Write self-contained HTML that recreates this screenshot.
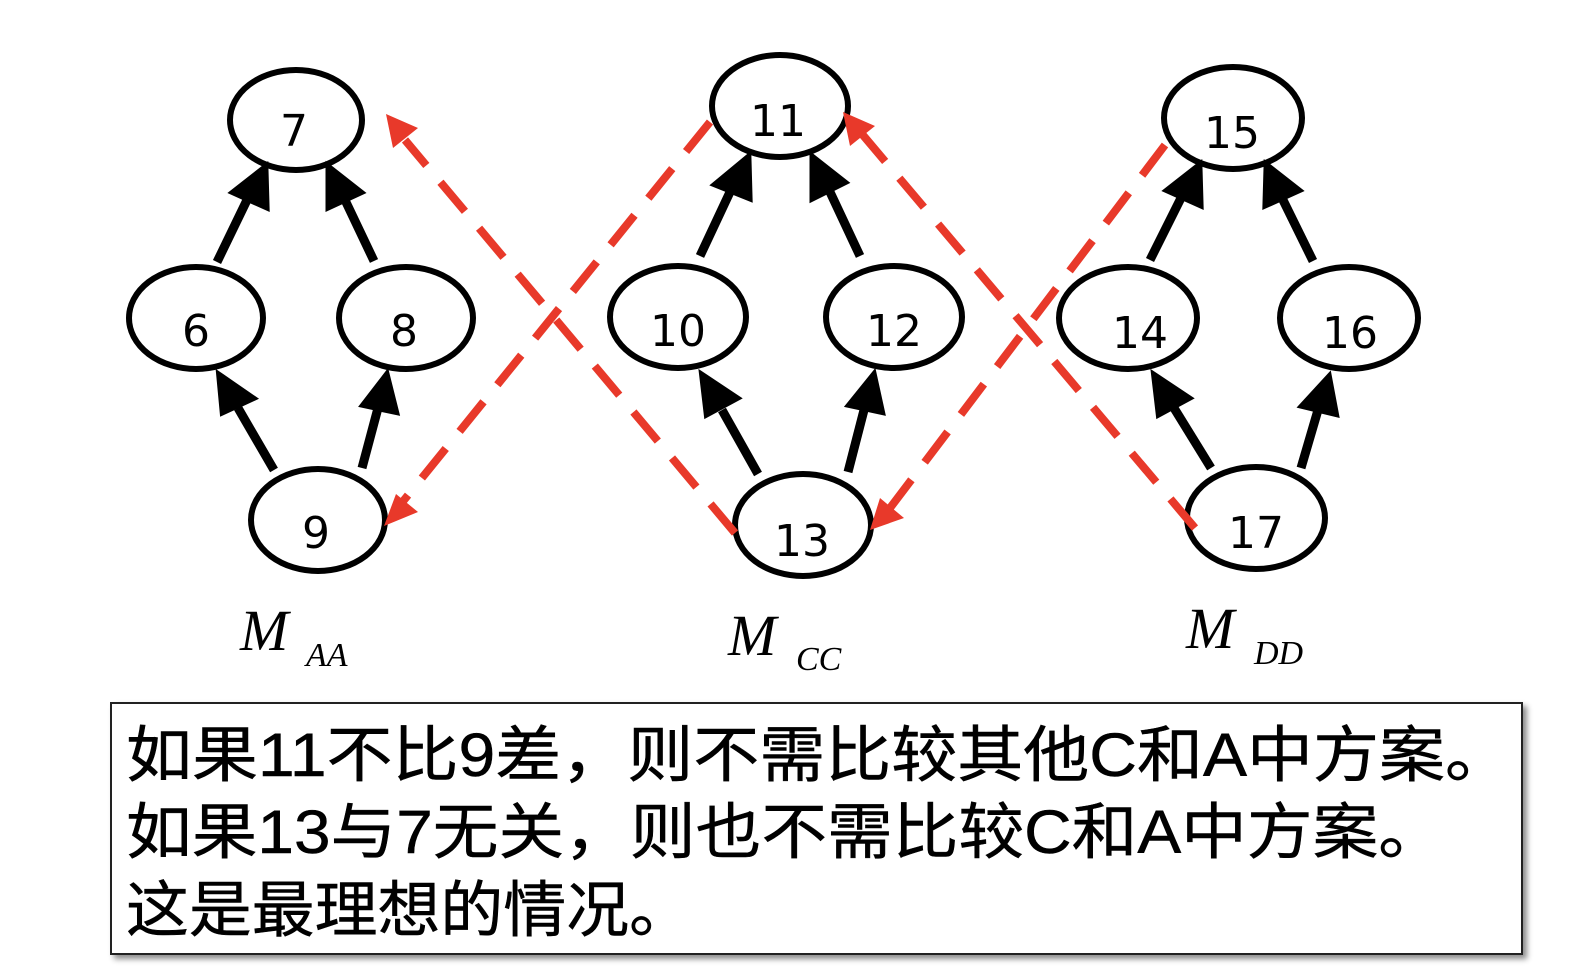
<!DOCTYPE html>
<html><head><meta charset="utf-8"><style>
html,body{margin:0;padding:0;background:#fff;}
svg{display:block;}
</style></head><body>
<svg width="1578" height="970" viewBox="0 0 1578 970" xmlns="http://www.w3.org/2000/svg">
<defs>
<filter id="sh" x="-5%" y="-5%" width="110%" height="120%"><feDropShadow dx="4" dy="4" stdDeviation="3" flood-color="#000" flood-opacity="0.45"/></filter>
</defs>
<g fill="none" stroke="#000" stroke-width="6">
<ellipse cx="296" cy="120" rx="66" ry="50"/>
<ellipse cx="196" cy="318" rx="67" ry="51"/>
<ellipse cx="406" cy="318" rx="67" ry="51"/>
<ellipse cx="318" cy="520" rx="67" ry="51"/>
<ellipse cx="780" cy="106" rx="68" ry="51"/>
<ellipse cx="678" cy="317" rx="68" ry="51"/>
<ellipse cx="894" cy="317" rx="68" ry="51"/>
<ellipse cx="803" cy="525" rx="68" ry="51"/>
<ellipse cx="1233" cy="118" rx="69" ry="51"/>
<ellipse cx="1128" cy="318" rx="69" ry="51"/>
<ellipse cx="1349" cy="318" rx="69" ry="51"/>
<ellipse cx="1256" cy="518" rx="69" ry="51"/>
</g>
<g stroke="#000" stroke-width="9" fill="#000">
<line x1="217" y1="262" x2="247" y2="200"/><polygon points="264,170 265,205 236,192"/>
<line x1="374" y1="261" x2="345" y2="200"/><polygon points="330,170 358,192 330,205"/>
<line x1="274" y1="470" x2="238" y2="408"/><polygon points="221,378 250,398 224,410"/>
<line x1="362" y1="468" x2="378" y2="408"/><polygon points="386,378 394,410 366,404"/>
<line x1="700" y1="256" x2="730" y2="192"/><polygon points="747,160 748,196 718,184"/>
<line x1="860" y1="256" x2="830" y2="192"/><polygon points="814,160 842,182 814,196"/>
<line x1="758" y1="474" x2="722" y2="410"/><polygon points="704,378 734,398 708,412"/>
<line x1="848" y1="472" x2="864" y2="410"/><polygon points="873,378 880,410 852,404"/>
<line x1="1150" y1="260" x2="1181" y2="198"/><polygon points="1198,168 1199,203 1170,190"/>
<line x1="1313" y1="261" x2="1283" y2="200"/><polygon points="1268,168 1296,190 1267,203"/>
<line x1="1211" y1="468" x2="1174" y2="408"/><polygon points="1156,378 1186,398 1160,412"/>
<line x1="1301" y1="468" x2="1318" y2="410"/><polygon points="1328,380 1334,412 1305,405"/>
</g>
<g stroke="#e8392a" stroke-width="8" stroke-dasharray="38,22" fill="none">
<line x1="735" y1="533" x2="405" y2="140"/>
<line x1="710" y1="122" x2="400" y2="505"/>
<line x1="1195" y1="528" x2="862" y2="134"/>
<line x1="1165" y1="145" x2="890" y2="508"/>
</g>
<g fill="#e8392a">
<polygon points="386,114 418,128 393,148"/>
<polygon points="384,526 396,494 418,512"/>
<polygon points="843,112 875,126 850,146"/>
<polygon points="870,530 880,498 904,518"/>
</g>
<g font-family="'DejaVu Sans','Liberation Sans',sans-serif" font-size="44" text-anchor="middle" fill="#000">
<text x="294" y="146">7</text>
<text x="196" y="346">6</text>
<text x="404" y="346">8</text>
<text x="316" y="548">9</text>
<text x="778" y="136">11</text>
<text x="678" y="346">10</text>
<text x="894" y="346">12</text>
<text x="802" y="556">13</text>
<text x="1232" y="148">15</text>
<text x="1140" y="348">14</text>
<text x="1350" y="348">16</text>
<text x="1256" y="548">17</text>
</g>
<g font-family="'Liberation Serif',serif" font-style="italic" fill="#000">
<text x="240" y="650" font-size="58">M</text><text x="306" y="666" font-size="34">AA</text>
<text x="728" y="655" font-size="58">M</text><text x="796" y="670" font-size="34">CC</text>
<text x="1186" y="648" font-size="58">M</text><text x="1254" y="664" font-size="34">DD</text>
</g>
<rect x="111" y="703" width="1411" height="251" fill="#fff" stroke="#222" stroke-width="2" filter="url(#sh)"/>
<g font-family="'Liberation Sans','Noto Sans CJK SC',sans-serif" font-size="61" fill="#000" stroke="#000" stroke-width="0.5">
<text x="126" y="776" textLength="1385" lengthAdjust="spacingAndGlyphs">如果11不比9差，则不需比较其他C和A中方案。</text>
<text x="126" y="853" textLength="1318" lengthAdjust="spacingAndGlyphs">如果13与7无关，则也不需比较C和A中方案。</text>
<text x="126" y="931" textLength="566" lengthAdjust="spacingAndGlyphs">这是最理想的情况。</text>
</g>
</svg>
</body></html>
